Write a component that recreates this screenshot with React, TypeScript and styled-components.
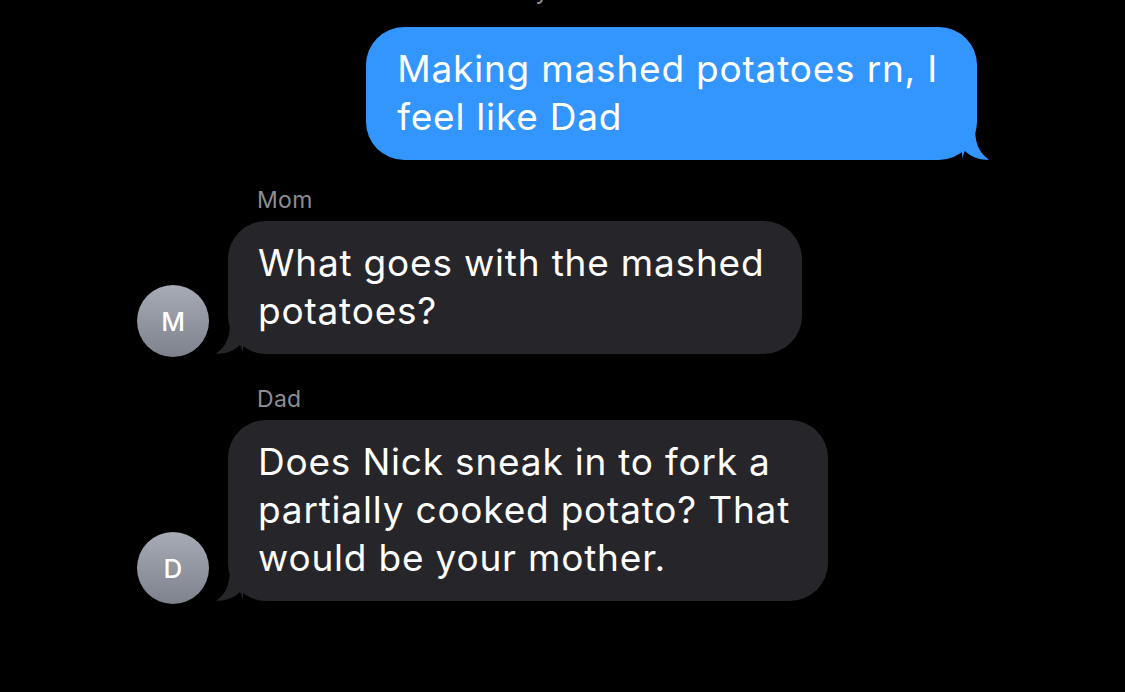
import React from "react";
import styled, { createGlobalStyle } from "styled-components";

const GlobalStyle = createGlobalStyle`
  html, body {
    margin: 0;
    padding: 0;
    background: #000;
  }
  body {
    font-family: Inter, Roboto, "Liberation Sans", Arial, sans-serif;
    -webkit-font-smoothing: antialiased;
  }
`;

const Screen = styled.div`
  width: 1125px;
  height: 692px;
  overflow: hidden;
  background: #000;
  display: flex;
  flex-direction: column;
`;

const Stamp = styled.div`
  margin-top: -22px;
  height: 26px;
  line-height: 26px;
  text-align: center;
  font-size: 24px;
  color: #8e8e93;
`;

const OutRow = styled.div`
  display: flex;
  justify-content: flex-end;
  padding-right: 148px;
  margin-top: 23px;
`;

const InGroup = styled.div<{ $top: number }>`
  display: flex;
  flex-direction: column;
  padding-left: 137px;
  margin-top: ${(p) => p.$top}px;
`;

const Sender = styled.div`
  margin-left: 120px;
  font-size: 23px;
  line-height: 28px;
  letter-spacing: 0.3px;
  color: #8d8d93;
  margin-bottom: 7px;
`;

const InRow = styled.div`
  display: flex;
  align-items: flex-end;
  gap: 19px;
`;

const Avatar = styled.div`
  width: 72px;
  height: 72px;
  border-radius: 50%;
  background: linear-gradient(180deg, #a7abb5 0%, #7e828c 100%);
  color: #fff;
  font-size: 26px;
  font-weight: 500;
  display: flex;
  align-items: center;
  justify-content: center;
  margin-bottom: -3px;
  flex-shrink: 0;
`;

const Bubble = styled.div<{ $out?: boolean }>`
  position: relative;
  background: ${(p) => (p.$out ? "#3395fe" : "#26252a")};
  color: #fff;
  font-size: 37px;
  line-height: 48px;
  letter-spacing: 0.8px;
  border-radius: 38px;
  padding: ${(p) => (p.$out ? "18px 39px 19px 31px" : "18px 38px 19px 30px")};
  white-space: nowrap;
`;

const Tail = styled.svg<{ $out?: boolean }>`
  position: absolute;
  bottom: 0;
  width: 28px;
  height: 34px;
  ${(p) => (p.$out ? "right: -13px;" : "left: -13px;")}
`;

function BubbleTail({ out, color }: { out?: boolean; color: string }) {
  // drawn for the right side; mirrored for incoming messages
  return (
    <Tail $out={out} viewBox="0 0 28 34" style={out ? undefined : { transform: "scaleX(-1)" }}>
      <path
        d="M0 0 L13 0 C13 14 15 26 27 33.5 C18 34.5 9 31 3 25 C1 29 0 31 0 34 Z"
        fill={color}
      />
    </Tail>
  );
}

export default function App() {
  return (
    <>
      <GlobalStyle />
      <Screen>
        <Stamp>Today 6:12 PM</Stamp>
        <OutRow>
          <Bubble $out>
            Making mashed potatoes rn, I
            <br />
            feel like Dad
            <BubbleTail out color="#3395fe" />
          </Bubble>
        </OutRow>

        <InGroup $top={26}>
          <Sender>Mom</Sender>
          <InRow>
            <Avatar>M</Avatar>
            <Bubble>
              What goes with the mashed
              <br />
              potatoes?
              <BubbleTail color="#26252a" />
            </Bubble>
          </InRow>
        </InGroup>

        <InGroup $top={31}>
          <Sender>Dad</Sender>
          <InRow>
            <Avatar>D</Avatar>
            <Bubble>
              Does Nick sneak in to fork a
              <br />
              partially cooked potato? That
              <br />
              would be your mother.
              <BubbleTail color="#26252a" />
            </Bubble>
          </InRow>
        </InGroup>
      </Screen>
    </>
  );
}
